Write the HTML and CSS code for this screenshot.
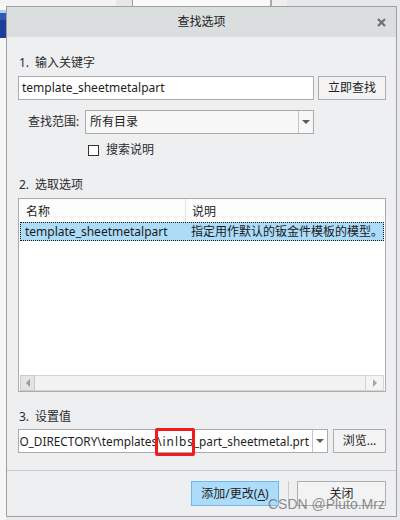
FILE: index.html
```html
<!DOCTYPE html>
<html lang="zh">
<head>
<meta charset="utf-8">
<title>查找选项</title>
<link rel="stylesheet" href="styles.css">
</head>
<body>
<div class="stage">
  <div class="dialog">
    <div class="titlebar">
      <span class="title">查找选项</span>
      <span class="close">
        <svg width="9" height="9" viewBox="0 0 9 9"><path d="M1 1 L8 8 M8 1 L1 8" stroke="#707070" stroke-width="2.2" fill="none"/></svg>
      </span>
    </div>
    <div class="content">
      <div class="section-label"><span class="num">1.</span><span>输入关键字</span></div>
      <div class="row row-search">
        <div class="field">template_sheetmetalpart</div>
        <button class="btn btn-find">立即查找</button>
      </div>
      <div class="row row-scope">
        <span class="scope-label">查找范围:</span>
        <div class="combo combo-scope">
          <span class="combo-text">所有目录</span>
          <span class="combo-arrow"><span class="tri"></span></span>
        </div>
      </div>
      <div class="check-row"><span class="checkbox"></span><span>搜索说明</span></div>
      <div class="section-label label-2"><span class="num">2.</span><span>选取选项</span></div>
      <div class="listbox">
        <div class="list-head">
          <div class="hcol hcol-name">名称</div>
          <div class="hcol hcol-desc">说明</div>
        </div>
        <div class="list-row selected">
          <div class="rcol rcol-name">template_sheetmetalpart</div>
          <div class="rcol rcol-desc">指定用作默认的钣金件模板的模型。</div>
        </div>
        <div class="list-fill"></div>
        <div class="hscroll">
          <span class="sb-btn sb-left"><span class="tri-left"></span></span>
          <span class="sb-thumb"></span>
          <span class="sb-btn sb-right"><span class="tri-right"></span></span>
        </div>
      </div>
      <div class="section-label label-3"><span class="num">3.</span><span>设置值</span></div>
      <div class="row row-value">
        <div class="combo combo-value">
          <div class="value-clip"><span class="value-text">$PRO_DIRECTORY\templates<span class="mark">\inlbs</span>_part_sheetmetal.prt</span></div>
          <span class="combo-arrow"><span class="tri"></span></span>
        </div>
        <button class="btn btn-browse">浏览...</button>
      </div>
    </div>
    <div class="footer">
      <button class="btn btn-primary">添加/更改(<u>A</u>)</button>
      <span class="vsep"></span>
      <button class="btn btn-close">关闭</button>
    </div>
  </div>
  <div class="watermark">CSDN @Pluto.Mrz</div>
</div>
</body>
</html>
```

FILE: styles.css
```css
* { box-sizing: border-box; }
html, body { margin: 0; padding: 0; }
body {
  width: 400px;
  height: 520px;
  overflow: hidden;
  font-family: "Noto Sans", "Noto Sans CJK SC", sans-serif;
  font-size: 12px;
  color: #222;
  background:
    linear-gradient(to right, #f3f3f3 0 116px, #e7e7e7 116px 132px, #9d9d9d 132px 133px, #fafafa 133px 270px, #ababab 270px 272px, #efefef 272px 287px, #e6e7ea 287px) 0 0 / 100% 6px no-repeat,
    linear-gradient(to bottom, #fafafa 0 10px, #a9d3f2 10px 13px, #3558b0 13px 20px, #1f3e9c 20px 38px, #f6f6f6 38px) 0 0 / 6px 100% no-repeat,
    #eaeaed;
}
.stage {
  position: relative;
  height: 520px;
  padding: 6px 0 0 6px;
}
.dialog {
  width: 391px;
  height: 511px;
  border: 1px solid #a0a0a0;
  background: #eeeff1;
  display: flex;
  flex-direction: column;
}
.titlebar {
  flex: none;
  height: 30px;
  background: #dbdedf;
  display: grid;
  grid-template-columns: 1fr auto 1fr;
  align-items: center;
}
.title {
  grid-column: 2;
  font-size: 12px;
  color: #222;
  line-height: 16px;
}
.close {
  grid-column: 3;
  justify-self: end;
  margin-right: 10px;
  display: flex;
}
.content {
  flex: 1;
  padding: 18px 10px 0 11px;
}
.section-label {
  height: 16px;
  line-height: 16px;
  display: flex;
  color: #2b2b2b;
}
.num { width: 17px; padding-left: 1px; }
.row { display: flex; height: 24px; }
.row-search { margin-top: 5px; gap: 4px; }
.field {
  flex: 1;
  background: #fff;
  border: 1px solid #ababab;
  line-height: 22px;
  padding: 0 3px;
  color: #1e1e1e;
}
.btn {
  font: inherit;
  color: #222;
  background: #f3f3f3;
  border: 1px solid #adadad;
  margin: 0;
  padding: 0;
  display: flex;
  align-items: center;
  justify-content: center;
  line-height: 16px;
}
.btn-find { width: 68px; }
.row-scope { margin-top: 10px; }
.scope-label {
  width: 67px;
  padding-left: 10px;
  line-height: 24px;
  color: #2b2b2b;
}
.combo {
  display: flex;
  border: 1px solid #ababab;
  background: #f7f7f7;
}
.combo-scope { width: 229px; }
.combo-text {
  flex: 1;
  padding-left: 4px;
  line-height: 22px;
}
.combo-arrow {
  width: 15px;
  flex: none;
  border-left: 1px solid #c5c5c5;
  display: flex;
  align-items: center;
  justify-content: center;
}
.tri {
  width: 0;
  height: 0;
  border-left: 4px solid transparent;
  border-right: 4px solid transparent;
  border-top: 4px solid #5a5a5a;
}
.check-row {
  margin-top: 8px;
  height: 16px;
  line-height: 16px;
  display: flex;
  align-items: center;
  gap: 7px;
  padding-left: 70px;
  color: #2b2b2b;
}
.checkbox {
  width: 11px;
  height: 11px;
  border: 1px solid #333;
  background: #fff;
}
.label-2 { margin-top: 19px; }
.listbox {
  margin-top: 5px;
  height: 194px;
  border: 1px solid #acacac;
  background: #fff;
  display: flex;
  flex-direction: column;
}
.list-head {
  height: 23px;
  display: flex;
  background: #fcfcfc;
  flex: none;
}
.hcol { line-height: 16px; padding-top: 5px; color: #1e1e1e; }
.hcol-name { width: 167px; padding-left: 7px; border-right: 1px solid #e3e3e3; }
.hcol-desc { flex: 1; padding-left: 6px; }
.list-row {
  height: 19px;
  margin: 0 1px;
  display: flex;
  flex: none;
}
.selected {
  background: #addcf9;
  border: 1px dotted #1a1a1a;
}
.rcol { line-height: 17px; white-space: nowrap; overflow: hidden; color: #1a1a1a; }
.rcol-name { width: 165px; padding-left: 4px; }
.rcol-desc { flex: 1; padding-left: 5px; }
.list-fill { flex: 1; }
.hscroll {
  height: 16px;
  margin: 0 1px;
  display: flex;
  flex: none;
  background: #f0f0f0;
}
.sb-btn {
  display: flex;
  align-items: center;
  justify-content: center;
  border: 1px solid #c9c9c9;
}
.sb-left { width: 15px; background: #e4e4e4; }
.sb-right { width: 19px; background: #f4f4f4; border-color: #d5d5d5; }
.sb-thumb {
  flex: 1;
  border-top: 1px solid #d3d3d3;
  border-bottom: 1px solid #d3d3d3;
  background: #f2f2f2;
}
.tri-left {
  width: 0; height: 0;
  border-top: 4px solid transparent;
  border-bottom: 4px solid transparent;
  border-right: 4px solid #9a9a9a;
}
.tri-right {
  width: 0; height: 0;
  border-top: 4px solid transparent;
  border-bottom: 4px solid transparent;
  border-left: 4px solid #a8a8a8;
}
.label-3 { margin-top: 17px; }
.row-value { margin-top: 4px; gap: 5px; }
.combo-value { width: 310px; background: #fff; }
.value-clip {
  flex: 1;
  min-width: 0;
  display: flex;
  justify-content: flex-end;
  align-items: center;
  overflow-x: clip;
  overflow-y: visible;
  padding-right: 3px;
}
.value-text {
  flex: none;
  white-space: nowrap;
  line-height: 16px;
  font-size: 11.8px;
  color: #1e1e1e;
}
.mark {
  position: relative;
  letter-spacing: 1px;
}
.mark::after {
  content: "";
  position: absolute;
  left: -2px;
  right: -1px;
  top: -5px;
  bottom: -7px;
  border: 3px solid #f01c1c;
  border-radius: 2px;
}
.btn-browse { width: 53px; }
.footer {
  flex: none;
  border-top: 1px solid #c9c9c9;
  padding: 10px 10px 10px 0;
  display: flex;
  justify-content: flex-end;
  height: 46px;
}
.btn-primary {
  width: 88px;
  background: #acdcf9;
  border-color: #72b8e6;
}
.btn-primary u { text-underline-offset: 2px; }
.vsep {
  width: 1px;
  background: #cbcbcb;
  margin: 0 8px 0 9px;
}
.btn-close { width: 89px; }
.watermark {
  position: absolute;
  left: 268px;
  top: 496px;
  font-family: "Liberation Sans", sans-serif;
  font-size: 14px;
  line-height: 16px;
  color: rgba(105, 105, 105, 0.75);
  white-space: nowrap;
}
```
